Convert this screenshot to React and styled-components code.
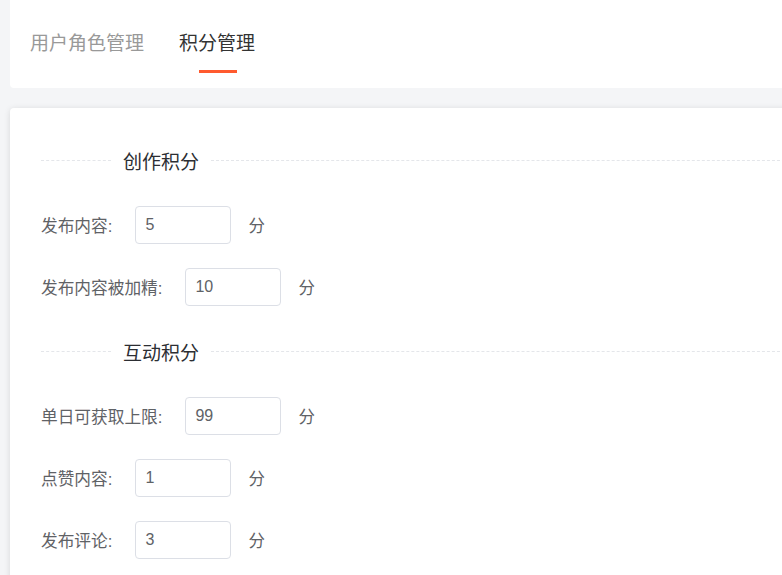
import React from 'react'
import styled, { createGlobalStyle } from 'styled-components'

const GlobalStyle = createGlobalStyle`
  html, body {
    margin: 0;
    padding: 0;
    background: #f4f5f7;
    overflow: hidden;
    font-family: "Liberation Sans", "Noto Sans CJK SC", sans-serif;
  }
`

const tabs = ['用户角色管理', '积分管理']

const sections = [
  {
    title: '创作积分',
    rows: [
      { label: '发布内容', value: '5' },
      { label: '发布内容被加精', value: '10' },
    ],
  },
  {
    title: '互动积分',
    rows: [
      { label: '单日可获取上限', value: '99' },
      { label: '点赞内容', value: '1' },
      { label: '发布评论', value: '3' },
    ],
  },
]

const App = () => {
  return (
    <Page>
      <GlobalStyle />
      <TabCard>
        {tabs.map((t, i) => (
          <Tab key={t} active={i === 1}>
            {t}
          </Tab>
        ))}
      </TabCard>
      <FormCard>
        {sections.map((s, si) => (
          <Section key={s.title} first={si === 0}>
            <Divider>
              <DividerText>{s.title}</DividerText>
            </Divider>
            {s.rows.map(r => (
              <Row key={r.label}>
                <Label>{r.label}:</Label>
                <Input defaultValue={r.value} />
                <Unit>分</Unit>
              </Row>
            ))}
          </Section>
        ))}
      </FormCard>
    </Page>
  )
}

const Page = styled.div`
  width: 800px;
  padding-left: 10px;
  display: flex;
  flex-direction: column;
  gap: 20px;
`

const TabCard = styled.div`
  height: 88px;
  background: #fff;
  border-radius: 0 0 4px 4px;
  display: flex;
  align-items: flex-start;
  padding: 31px 0 0 20px;
  box-sizing: border-box;
  gap: 35px;
`

const Tab = styled.div`
  position: relative;
  font-size: 19px;
  line-height: 26px;
  color: ${props => (props.active ? '#333' : '#999')};
  &::after {
    content: '';
    display: ${props => (props.active ? 'block' : 'none')};
    position: absolute;
    left: 50%;
    top: 39px;
    width: 38px;
    height: 3px;
    margin-left: -18px;
    background: #ff5a2e;
  }
`

const FormCard = styled.div`
  min-height: 500px;
  background: #fff;
  border-radius: 4px;
  box-shadow: 0 1px 6px rgba(0, 0, 0, 0.12);
  padding: 41px 0 0 31px;
  box-sizing: border-box;
  display: flex;
  flex-direction: column;
`

const Section = styled.div`
  display: flex;
  flex-direction: column;
  margin-top: ${props => (props.first ? '0' : '10px')};
`

const Divider = styled.div`
  display: flex;
  align-items: center;
  height: 22px;
  margin-bottom: 35px;
  &::before,
  &::after {
    content: '';
    border-top: 1px dashed #e4e6ea;
  }
  &::before {
    width: 70px;
  }
  &::after {
    flex: 1;
  }
`

const DividerText = styled.span`
  padding: 0 12px;
  font-size: 19px;
  color: #2c2e33;
  white-space: nowrap;
`

const Row = styled.div`
  display: flex;
  align-items: center;
  height: 38px;
  margin-bottom: 24px;
`

const Label = styled.label`
  font-size: 16.7px;
  color: #5f6266;
  margin-right: 23px;
`

const Input = styled.input`
  width: 96px;
  height: 38px;
  box-sizing: border-box;
  border: 1px solid #dcdfe6;
  border-radius: 4px;
  padding: 0 9px;
  font-size: 16px;
  font-family: inherit;
  color: #606266;
  outline: none;
`

const Unit = styled.span`
  margin-left: 17px;
  font-size: 16.5px;
  color: #5f6266;
`

export default App
